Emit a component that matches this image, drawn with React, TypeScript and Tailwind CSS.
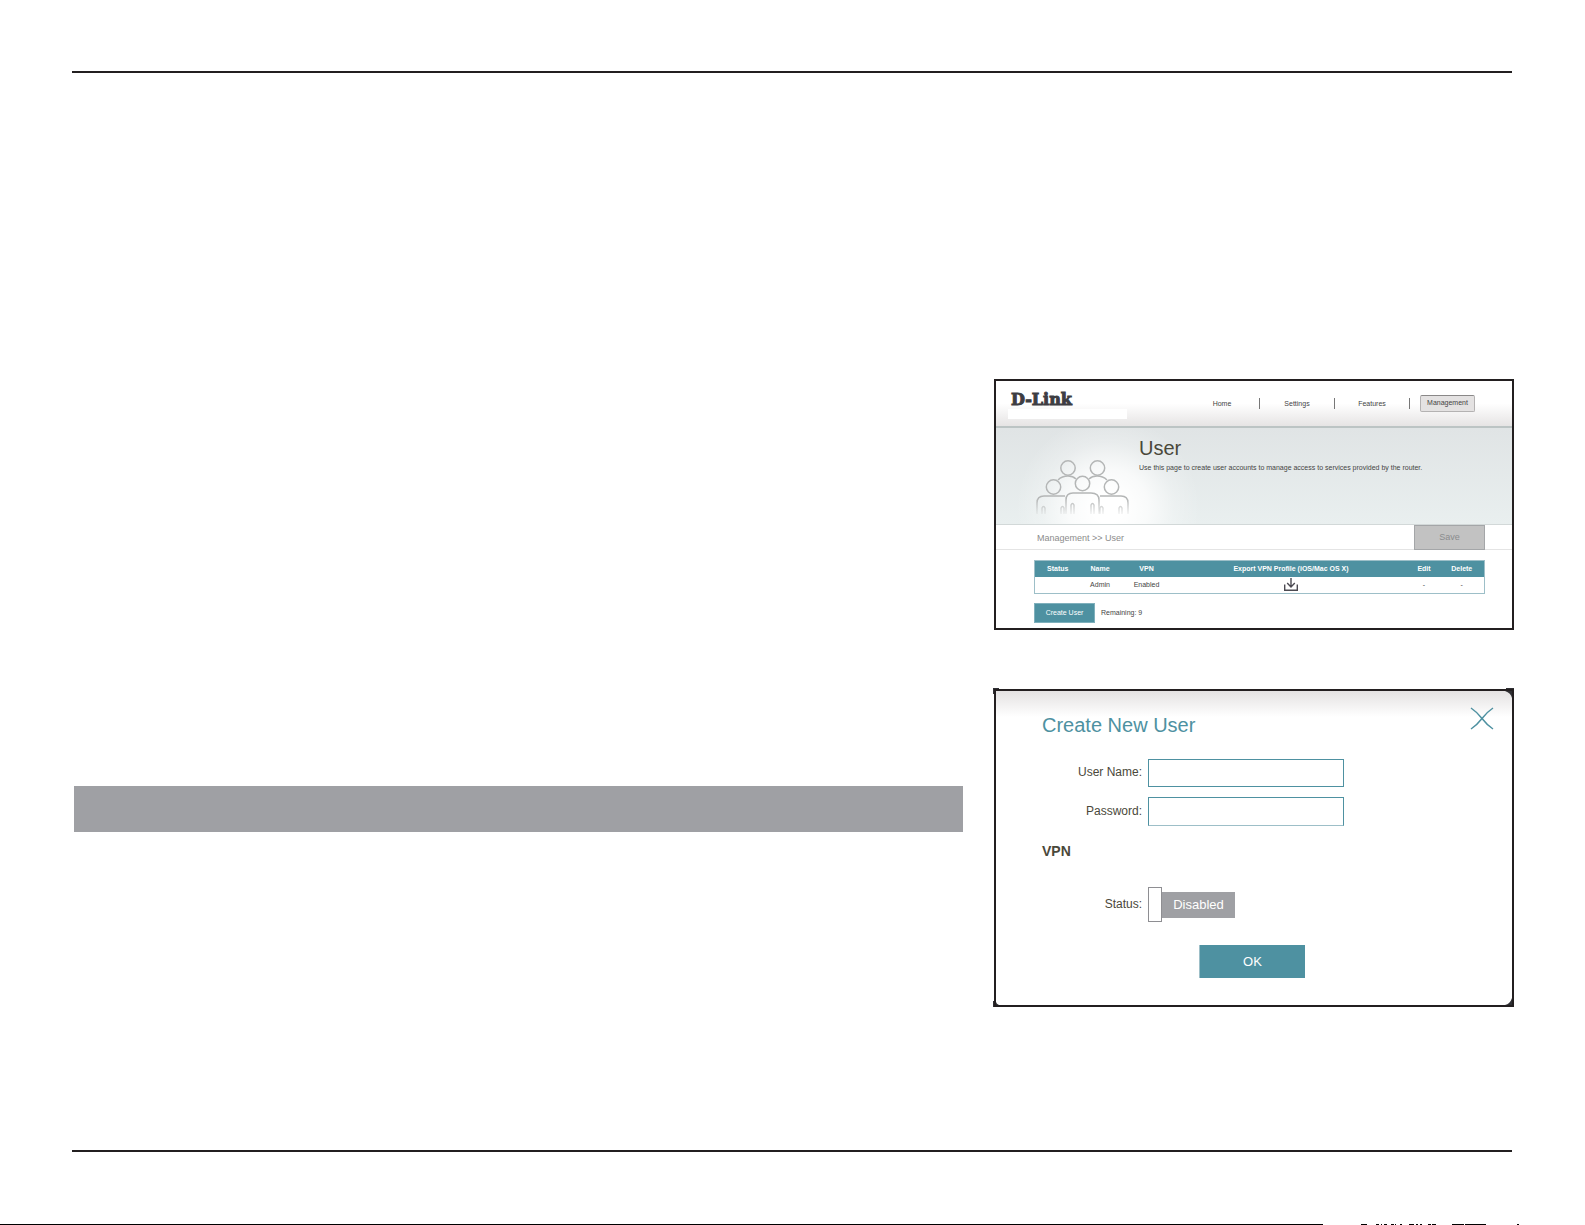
import React, { useState } from "react";

function PeopleIcon() {
  return (
    <svg viewBox="0 0 96 58" className="h-[58px] w-24" fill="none" stroke="url(#fade)" strokeWidth="1.5" aria-hidden="true">
      <defs>
        <linearGradient id="fade" gradientUnits="userSpaceOnUse" x1="0" y1="0" x2="0" y2="58">
          <stop offset="0" stopColor="#b4b6b6" />
          <stop offset="0.68" stopColor="#b4b6b6" />
          <stop offset="1" stopColor="#b4b6b6" stopOpacity="0" />
        </linearGradient>
      </defs>
      <circle cx="33" cy="9" r="7.2" />
      <circle cx="62.500" cy="9" r="7.2" />
      <circle cx="18.500" cy="28" r="7.2" />
      <circle cx="47.500" cy="24.500" r="7.200" />
      <circle cx="76.500" cy="28" r="7.2" />
      <path d="M23 21c3-3 6-4 10-4s6 1 8 3M54 20c2-2 5-3 8-3s7 1 10 4" />
      <path d="M2 55V44q0-7 7-7h21M65 37h21q7 0 7 7v11" />
      <path d="M31 55V41q0-7 7-7h18q8 0 8 7v14" />
      <path d="M7 55v-6q1.500-3 3 0v6M26 55v-6q1.500-3 3 0v6M36 55V46q1.500-3 3 0v9M56 55V46q1.500-3 3 0v9M65 55v-6q1.500-3 3 0v6M84 55v-6q1.500-3 3 0v6" />
    </svg>
  );
}

function DownloadIcon() {
  return (
    <svg viewBox="0 0 14 13" className="h-[13px] w-3.5" fill="none" stroke="#4c4a52" strokeWidth="1.400" aria-hidden="true">
      <path d="M7 0v9M3.200 5 7 9l3.800-4M.7 6.500v5.700h12.600V6.500" />
    </svg>
  );
}

function Corner({ className }: { className: string }) {
  return (
    <svg viewBox="0 0 7 7" className={"absolute " + className} aria-hidden="true">
      <path d="M7 0v7Q6 2 0 0z" fill="#303034" />
    </svg>
  );
}

const links = ["Home", "Settings", "Features"];

function UserPage() {
  return (
    <section className="flex flex-col border-2 border-[#231f20] bg-white pb-[5px]">
      <header className="flex h-[45px] items-start justify-between bg-linear-to-b from-white from-50% to-[#e6e4e4] pl-3 pr-[37px]">
        <div>
          <div className="flex h-7 items-end pl-[3px] font-['DejaVu_Serif',serif] text-base/[18px] font-bold text-[#3d3d42] [-webkit-text-stroke:1px_#3d3d42]">
            D-Link
          </div>
          <div className="h-[10px] w-[119px] bg-white" />
        </div>
        <nav className="flex h-[45px] items-center text-[7px] text-[#444]">
          {links.map((l) => (
            <a key={l} href="#" className="w-[75px] border-r border-[#777] text-center leading-[11px]">
              {l}
            </a>
          ))}
          <a
            href="#"
            aria-current="page"
            className="ml-2.5 flex h-[17px] w-[55px] items-center justify-center rounded-xs border border-[#b4b2b2] border-t-[#8a8888] bg-[#e4e2e2]"
          >
            Management
          </a>
        </nav>
      </header>
      <div className="flex h-[99px] border-t-2 border-b border-t-[#bcc4c4] border-b-[#d2d8d8] bg-[radial-gradient(circle_at_112px_80px,#fff_15px,#ffffffc0_40px,#ffffff40_66px,#ffffff00_92px),linear-gradient(#e0e4e5,#e9efef)]">
        <div className="flex w-[143px] items-end justify-end pr-2 pb-[7px]">
          <PeopleIcon />
        </div>
        <div className="pt-1.5">
          <h1 className="text-xl/7 text-[#4a483a]">User</h1>
          <p className="text-[7px] leading-3 text-[#444]">
            Use this page to create user accounts to manage access to services provided by the router.
          </p>
        </div>
      </div>
      <div className="flex h-[25px] items-stretch justify-between border-b border-[#e4e4e4] pr-[27px] pl-[41px]">
        <span className="self-end pb-1 text-[9px] text-[#8c8c8c]">Management &gt;&gt; User</span>
        <button className="-mb-px w-[71px] border border-[#a4a6a8] bg-[#c2c2c2] text-[9px] text-[#8a8c8e]">Save</button>
      </div>
      <div className="pt-2.5 pr-[27px] pl-[38px]">
        <table className="w-full table-fixed border border-[#9dbfc8] text-center text-[7px] text-[#444]">
          <colgroup>
            <col className="w-[46px]" />
            <col className="w-[39px]" />
            <col className="w-[54px]" />
            <col />
            <col className="w-[31px]" />
            <col className="w-[45px]" />
          </colgroup>
          <thead>
            <tr className="h-4 bg-[#4e91a1] text-white">
              <th>Status</th>
              <th>Name</th>
              <th>VPN</th>
              <th>Export VPN Profile (iOS/Mac OS X)</th>
              <th>Edit</th>
              <th>Delete</th>
            </tr>
          </thead>
          <tbody>
            <tr className="h-[17px]">
              <td />
              <td>Admin</td>
              <td>Enabled</td>
              <td>
                <button aria-label="Export VPN profile" className="mx-auto block">
                  <DownloadIcon />
                </button>
              </td>
              <td>-</td>
              <td>-</td>
            </tr>
          </tbody>
        </table>
        <div className="mt-[9px] flex items-center gap-1.5 text-[7px] text-[#444]">
          <button className="h-5 w-[61px] border border-[#7fb0bc] bg-[#4e91a1] text-white">Create User</button>
          <span>Remaining: 9</span>
        </div>
      </div>
    </section>
  );
}

function CreateUserDialog() {
  const [on, setOn] = useState(false);
  return (
    <section
      role="dialog"
      aria-labelledby="dlg"
      className="relative border-2 border-[#231f20] bg-white bg-linear-to-b from-[#e4e2e2] to-white to-[26px] pr-[18px] pb-[27px] pl-[46px] text-xs text-[#4a483a]"
    >
      <Corner className="top-0 right-0 size-[7px]" />
      <Corner className="right-0 bottom-0 size-[7px] rotate-90" />
      <Corner className="bottom-0 left-0 size-[3px] rotate-180" />
      <span className="absolute -top-[3px] -left-[3px] size-1.5 border-t border-l border-[#303034]" />
      <span className="absolute -bottom-0.5 -left-[3px] h-1.5 w-px bg-[#303034]" />
      <span className="absolute -top-[3px] -right-0.5 h-px w-2 bg-[#303034]" />
      <div className="flex items-start justify-between pt-4">
        <h2 id="dlg" className="pt-1 text-xl/7 text-[#4e91a1]">Create New User</h2>
        <button aria-label="Close">
          <svg viewBox="0 0 24 24" className="size-6" fill="none" stroke="#4e91a1" strokeWidth="1.500" aria-hidden="true">
            <path d="M1 1Q7 5 12 11.500T23 22M23 1Q17 5 12 11.500T1 22" />
          </svg>
        </button>
      </div>
      <div className="mt-5 grid grid-cols-[100px_196px] items-center gap-x-1.5 gap-y-2.5">
        <label htmlFor="name" className="pb-0.5 text-right">User Name:</label>
        <input id="name" className="h-7 border border-[#4e91a1] bg-white px-2 outline-none" />
        <label htmlFor="pass" className="pb-0.5 text-right">Password:</label>
        <input id="pass" type="password" className="h-[29px] border border-[#4e91a1] border-b-[#9dbfc8] bg-white px-2 outline-none" />
      </div>
      <h3 className="mt-[15px] text-sm/5 font-bold">VPN</h3>
      <div className="mt-[26px] grid grid-cols-[100px_196px] items-center gap-x-1.5">
        <span id="vpn" className="pb-0.5 text-right">Status:</span>
        <button role="switch" aria-checked={on} aria-labelledby="vpn" onClick={() => setOn(!on)} className="flex items-center">
          <span className="h-[35px] w-3.5 border border-[#8e8e92] bg-white" />
          <span className="flex h-[26px] w-[73px] items-center justify-center bg-[#9fa0a4] text-[13px] text-white">
            {on ? "Enabled" : "Disabled"}
          </span>
        </button>
      </div>
      <div className="mt-[23px] flex justify-center pr-8">
        <button className="h-[33px] w-[106px] border-l border-[#9dbfc8] bg-[#4e91a1] text-[13px] text-white">OK</button>
      </div>
    </section>
  );
}

function FooterEdge() {
  return (
    <svg viewBox="0 0 1585 1" preserveAspectRatio="none" className="block h-px w-full" aria-hidden="true">
      <path
        d="M0 .5H1323M1361 .5h6M1376 .5h3M1381 .5h1M1384 .5h3M1391 .5h3M1395 .5h1M1400 .5h2M1409 .5h5M1416 .5h2M1420 .5h2M1428 .5h3M1432 .5h4M1452 .5h12M1465 .5h21M1517 .5h2"
        stroke="#000"
        strokeWidth="1"
      />
    </svg>
  );
}

export default function App() {
  return (
    <div className="flex min-h-screen flex-col bg-white font-['Liberation_Sans',Arial,sans-serif]">
      <main className="mr-[73px] ml-[72px] flex flex-1 flex-col">
        <hr className="mt-[71px] border-t-2 border-[#231f20]" />
        <div className="-mr-0.5 flex flex-1 gap-[31px] pt-[306px] pl-0.5">
          <div className="flex-1 pt-[407px]">
            <div className="h-[46px] bg-[#9fa0a4]" />
          </div>
          <div className="flex w-[520px] flex-col gap-[59px]">
            <UserPage />
            <CreateUserDialog />
          </div>
        </div>
        <hr className="mb-[72px] border-t-2 border-[#231f20]" />
      </main>
      <footer>
        <FooterEdge />
      </footer>
    </div>
  );
}
